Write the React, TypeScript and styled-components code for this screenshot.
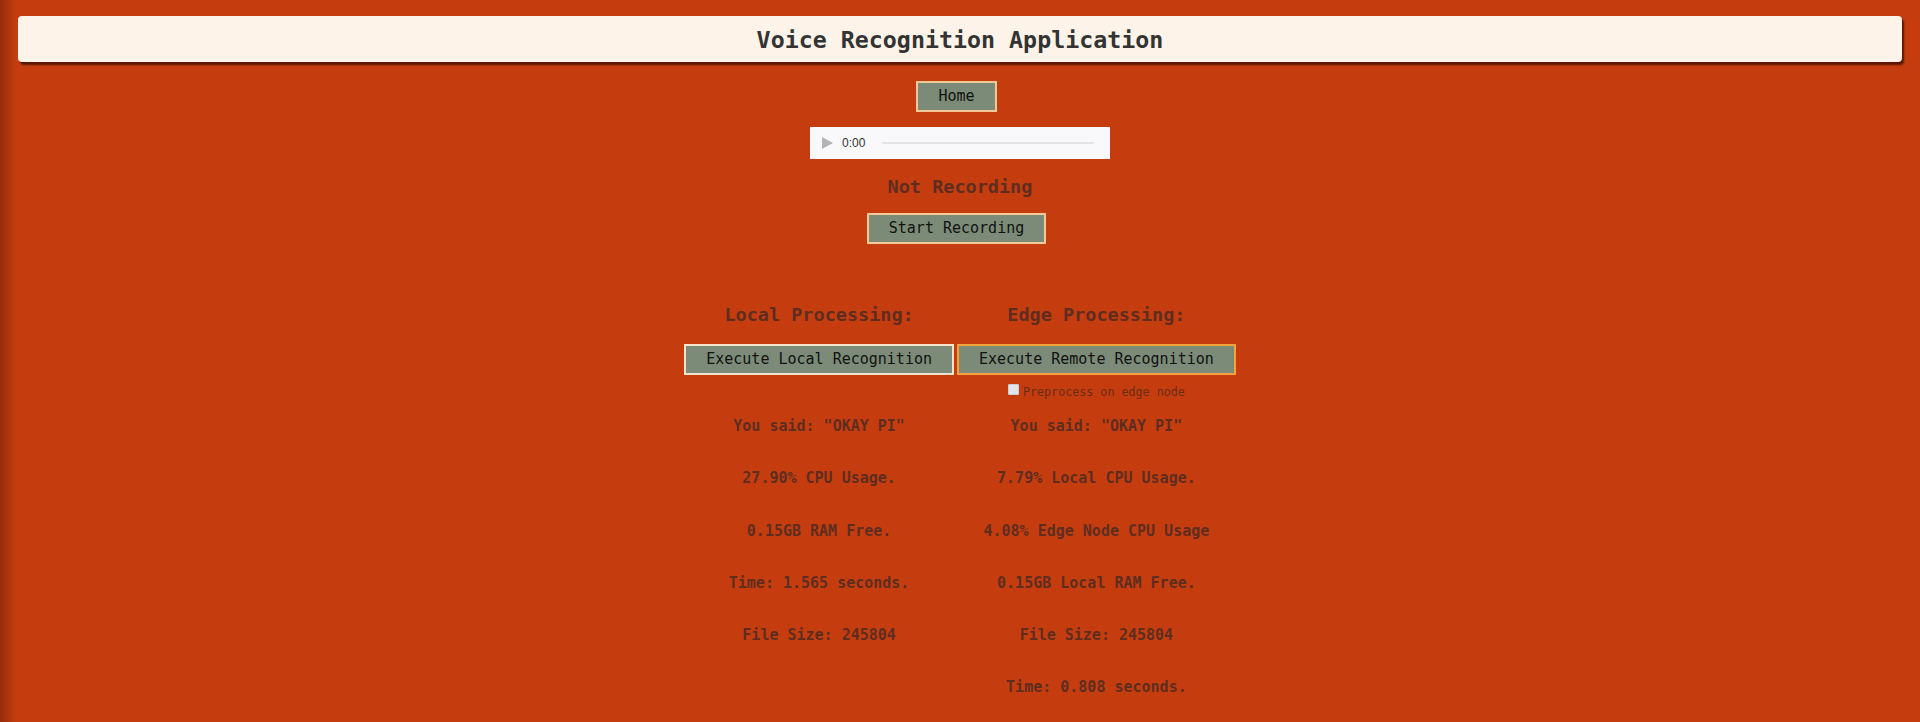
import React from "react";
import styled, { createGlobalStyle } from "styled-components";

const Global = createGlobalStyle`
  html, body {
    margin: 0;
    padding: 0;
  }
  body {
    background: linear-gradient(to right, rgba(60, 15, 0, 0.35), rgba(60, 15, 0, 0) 16px), #c53d0e;
    min-height: 722px;
    font-family: "DejaVu Sans Mono", "Liberation Mono", monospace;
  }
`;

const Page = styled.div`
  padding: 16px 18px 0;
  display: flex;
  flex-direction: column;
  align-items: center;
`;

const Header = styled.header`
  align-self: stretch;
  height: 46px;
  background: #fdf3e8;
  border-radius: 4px;
  box-shadow: 2px 3px 2px rgba(70, 15, 0, 0.85);
  display: flex;
  align-items: center;
  justify-content: center;
`;

const Title = styled.h1`
  margin: 0;
  font-size: 23.3px;
  font-weight: bold;
  color: #333333;
`;

const Button = styled.button<{ $border?: string }>`
  font-family: "DejaVu Sans Mono", "Liberation Mono", monospace;
  font-size: 15px;
  line-height: 17px;
  color: #111;
  background: #7b8b77;
  border: 2px solid ${(p) => p.$border || "#f3c99a"};
  padding: 5px 20px;
  margin: 0;
  white-space: nowrap;
  cursor: pointer;
`;

const ButtonRow = styled.div<{ $top: number }>`
  margin-top: ${(p) => p.$top}px;
  padding-right: 7px;
  display: flex;
  justify-content: center;
`;

const Player = styled.div`
  margin-top: 15px;
  width: 300px;
  height: 32px;
  background: #f9f9fb;
  display: flex;
  align-items: center;
  padding: 0 12px 0 12px;
  box-sizing: border-box;
  gap: 9px;
`;

const PlayIcon = styled.svg`
  width: 11px;
  height: 12px;
  flex: none;
`;

const TimeLabel = styled.span`
  font-family: "Liberation Sans", Arial, sans-serif;
  font-size: 12px;
  color: #333;
`;

const Track = styled.div`
  flex: 1;
  height: 2px;
  margin-left: 8px;
  margin-right: 4px;
  background: #e3e3e6;
  border-radius: 1px;
`;

const Status = styled.h3`
  margin: 17px 0 0;
  font-size: 18.5px;
  line-height: 22px;
  font-weight: bold;
  color: #5e2d20;
`;

const Columns = styled.div`
  margin-top: 60px;
  display: flex;
  align-items: flex-start;
  gap: 3px;
`;

const Column = styled.section`
  display: flex;
  flex-direction: column;
  align-items: center;
`;

const ColumnTitle = styled.h3`
  margin: 0 0 18px;
  font-size: 18.5px;
  line-height: 22px;
  font-weight: bold;
  color: #5e2d20;
`;

const OptionRow = styled.label`
  margin-top: 9px;
  display: flex;
  align-items: flex-start;
  gap: 4px;
  font-size: 11.7px;
  line-height: 16px;
  color: #6b2c18;
`;

const Check = styled.input`
  appearance: none;
  margin: 0;
  width: 11px;
  height: 11px;
  background: #e2e6ec;
  border: 1px solid #c9ced6;
  border-radius: 1px;
  box-sizing: border-box;
`;

const Results = styled.div<{ $top: number }>`
  margin-top: ${(p) => p.$top}px;
  display: flex;
  flex-direction: column;
  align-items: center;
  gap: 34.3px;
`;

const Line = styled.p`
  margin: 0;
  font-size: 15px;
  line-height: 18px;
  font-weight: bold;
  color: #5e2d20;
  white-space: nowrap;
`;

export default function App() {
  const local = [
    'You said: "OKAY PI"',
    "27.90% CPU Usage.",
    "0.15GB RAM Free.",
    "Time: 1.565 seconds.",
    "File Size: 245804",
  ];
  const edge = [
    'You said: "OKAY PI"',
    "7.79% Local CPU Usage.",
    "4.08% Edge Node CPU Usage",
    "0.15GB Local RAM Free.",
    "File Size: 245804",
    "Time: 0.808 seconds.",
  ];
  return (
    <>
      <Global />
      <Page>
        <Header>
          <Title>Voice Recognition Application</Title>
        </Header>
        <ButtonRow $top={19}>
          <Button>Home</Button>
        </ButtonRow>
        <Player>
          <PlayIcon viewBox="0 0 11 12">
            <path d="M0 0 L11 6 L0 12 Z" fill="#b4b4b8" />
          </PlayIcon>
          <TimeLabel>0:00</TimeLabel>
          <Track />
        </Player>
        <Status>Not Recording</Status>
        <ButtonRow $top={15}>
          <Button>Start Recording</Button>
        </ButtonRow>
        <Columns>
          <Column>
            <ColumnTitle>Local Processing:</ColumnTitle>
            <Button $border="#f6e3cc">Execute Local Recognition</Button>
            <Results $top={42}>
              {local.map((t) => (
                <Line key={t}>{t}</Line>
              ))}
            </Results>
          </Column>
          <Column>
            <ColumnTitle>Edge Processing:</ColumnTitle>
            <Button $border="#f2a33c">Execute Remote Recognition</Button>
            <OptionRow>
              <Check type="checkbox" />
              Preprocess on edge node
            </OptionRow>
            <Results $top={17}>
              {edge.map((t) => (
                <Line key={t}>{t}</Line>
              ))}
            </Results>
          </Column>
        </Columns>
      </Page>
    </>
  );
}
